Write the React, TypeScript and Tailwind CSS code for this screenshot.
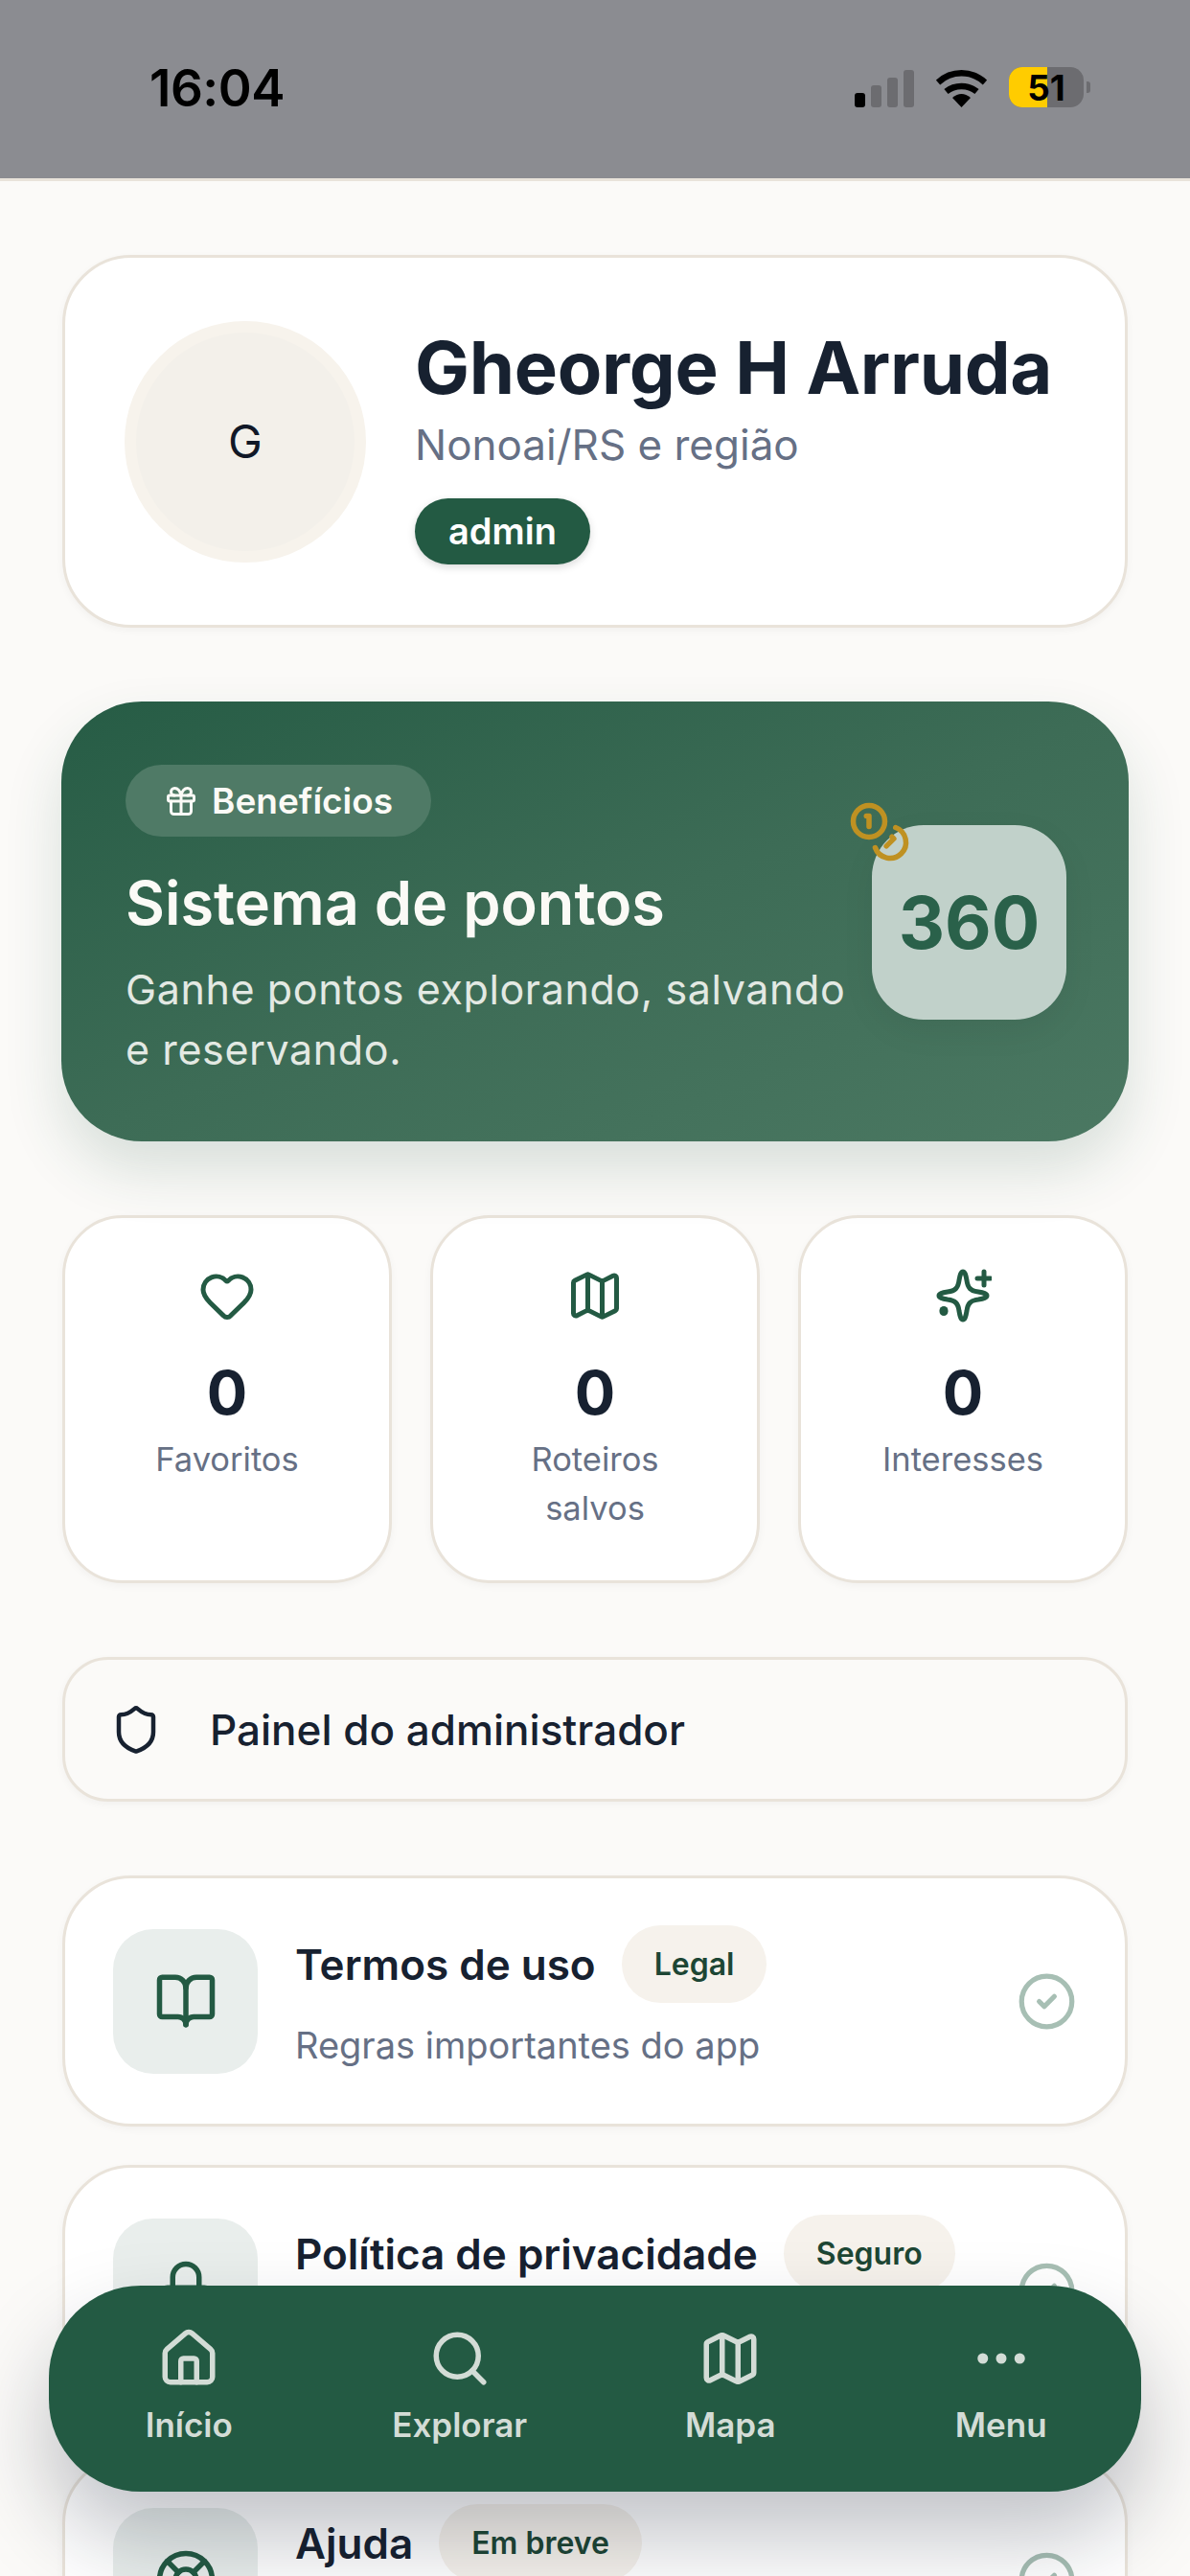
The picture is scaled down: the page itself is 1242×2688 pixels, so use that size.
import React from 'react';
import {
  BookOpen,
  CircleCheck,
  Coins,
  Ellipsis,
  Gift,
  Heart,
  House,
  LifeBuoy,
  Lock,
  Map as MapIcon,
  Search,
  Shield,
} from 'lucide-react';

function StatusBar() {
  return (
    <div className="h-[189px] shrink-0 bg-[#8b8c91] border-b-[3px] border-[#e9e3da] flex justify-between pl-[156px] pr-[104px] pt-[62px]">
      <span className="text-[53px] leading-[60px] font-semibold text-black tracking-[-0.5px]">16:04</span>
      <div className="flex items-start gap-[23px] pt-[11px]">
        <div className="flex items-end gap-[6px] h-[39px]">
          <div className="w-[11px] h-[15px] rounded-[3px] bg-black" />
          <div className="w-[11px] h-[23px] rounded-[3px] bg-[#6c6c70]" />
          <div className="w-[11px] h-[31px] rounded-[3px] bg-[#6c6c70]" />
          <div className="w-[11px] h-[39px] rounded-[3px] bg-[#6c6c70]" />
        </div>
        <svg width="53" height="40" viewBox="0 0 53 40" fill="none" stroke="#000" strokeWidth="6.5">
          <path d="M2 13C16 0 37 0 51 13" />
          <path d="M10.5 22.5c9-7.5 23-7.5 32 0" />
          <path d="M26.5 39L17 29Q26.5 21 36 29Z" fill="#000" stroke="none" />
        </svg>
        <div className="flex items-center gap-[3px] -mt-[3px]">
          <div className="relative w-[78px] h-[42px] rounded-[14px] overflow-hidden bg-[#6c6c70]">
            <div className="w-[40px] h-full bg-[#ffcc00]" />
            <span className="absolute inset-0 flex items-center justify-center text-[37px] leading-none font-bold text-black">51</span>
          </div>
          <div className="w-[4px] h-[12px] rounded-r-[3px] bg-[#6c6c70]" />
        </div>
      </div>
    </div>
  );
}

function ProfileCard() {
  return (
    <div className="h-[389px] rounded-[72px] bg-white border-[3px] border-[#e9e3da] shadow-[0_3px_9px_rgba(0,0,0,0.04)] flex items-center pl-[62px]">
      <div className="w-[252px] h-[252px] shrink-0 rounded-full bg-[#f3f0ea] border-[12px] border-[#f7f3ec] flex items-center justify-center text-[48px] text-[#111827]">
        G
      </div>
      <div className="ml-[51px] pt-[6px] flex flex-col items-start">
        <div className="text-[76px] leading-[90px] font-bold text-[#172130] tracking-[-0.3px] whitespace-nowrap">Gheorge H Arruda</div>
        <div className="mt-[3px] text-[44px] leading-[66px] text-[#667085] whitespace-nowrap">Nonoai/RS e região</div>
        <div className="mt-[23px] h-[69px] px-[35px] rounded-full bg-[#235a43] text-white text-[38px] font-semibold flex items-center shadow-[0_3px_9px_rgba(0,0,0,0.15)]">
          admin
        </div>
      </div>
    </div>
  );
}

function PointsCard() {
  return (
    <div className="relative h-[459px] -mx-[1px] rounded-[84px] bg-[linear-gradient(to_bottom_right,#265c45_0%,#3d6c56_50%,#4b7862_100%)] shadow-[0_30px_60px_rgba(36,90,67,0.16)] pl-[67px] pt-[66px]">
      <div className="inline-flex items-center gap-[14px] h-[75px] px-[40px] rounded-full bg-[#4f7a66] text-[#fbfaf6] text-[37px] font-semibold">
        <Gift size={36} strokeWidth={2} />
        Benefícios
      </div>
      <div className="mt-[27px] text-[63px] leading-[84px] font-semibold text-[#fbfaf6] whitespace-nowrap">Sistema de pontos</div>
      <p className="mt-[17px] w-[770px] text-[43px] tracking-[0.6px] leading-[63px] text-[#e3e9e3]">
        Ganhe pontos explorando, salvando e reservando.
      </p>
      <div className="absolute right-[65px] top-[129px] w-[203px] h-[203px] rounded-[54px] bg-[#c1d1ca] flex items-center justify-center pt-[2px] text-[75px] font-bold text-[#2a614a] shadow-[0_12px_36px_rgba(0,0,0,0.06)]">
        360
      </div>
      <Coins size={66} strokeWidth={2} className="absolute left-[821px] top-[103px] text-[#bf9122]" />
    </div>
  );
}

function SparkleIcon() {
  return (
    <svg width="60" height="60" viewBox="0 0 60 60" fill="none" stroke="#235a43" strokeWidth="5" strokeLinejoin="round" strokeLinecap="round">
      <path d="M30 5C32 5 33 8 34 14C35 22 38 25 46 26C52 27 55 28 55 30C55 32 52 33 46 34C38 35 35 38 34 46C33 52 32 55 30 55C28 55 27 52 26 46C25 38 22 35 14 34C8 33 5 32 5 30C5 28 8 27 14 26C22 25 25 22 26 14C27 8 28 5 30 5Z" />
      <path d="M52 5v14M45 12h14" />
      <path d="M10 45.5v1" strokeWidth="9" />
    </svg>
  );
}

const stats = [
  { label: 'Favoritos', icon: <Heart size={60} strokeWidth={2} className="text-[#235a43]" /> },
  { label: 'Roteiros salvos', icon: <MapIcon size={60} strokeWidth={2} className="text-[#235a43]" /> },
  { label: 'Interesses', icon: <SparkleIcon /> },
];

function Stats() {
  return (
    <div className="grid grid-cols-3 gap-[40px]">
      {stats.map((stat) => (
        <div
          key={stat.label}
          className="h-[384px] rounded-[63px] bg-white border-[3px] border-[#e9e3da] shadow-[0_3px_9px_rgba(0,0,0,0.04)] flex flex-col items-center pt-[51px] px-[48px] text-center"
        >
          {stat.icon}
          <div className="mt-[29px] text-[63px] leading-[84px] font-bold text-[#172130]">0</div>
          <div className="mt-[2px] text-[34.5px] leading-[51px] text-[#667085]">{stat.label}</div>
        </div>
      ))}
    </div>
  );
}

function AdminRow() {
  return (
    <div className="h-[151px] rounded-[48px] border-[3px] border-[#e9e3da] bg-[#fbfaf8] shadow-[0_3px_9px_rgba(0,0,0,0.04)] flex items-center pl-[47px] gap-[50px]">
      <Shield size={54} strokeWidth={2} className="text-[#172130]" />
      <span className="text-[44px] font-medium text-[#172130]">Painel do administrador</span>
    </div>
  );
}

const rows = [
  { title: 'Termos de uso', tag: 'Legal', desc: 'Regras importantes do app', icon: BookOpen },
  { title: 'Política de privacidade', tag: 'Seguro', desc: 'Como seus dados são usados', icon: Lock },
  { title: 'Ajuda', tag: 'Em breve', desc: 'Central de suporte', icon: LifeBuoy },
];

function InfoRows() {
  return (
    <div className="flex flex-col gap-[40px]">
      {rows.map((row) => {
        const Icon = row.icon;
        return (
          <div
            key={row.title}
            className="h-[262px] shrink-0 rounded-[72px] bg-white border-[3px] border-[#e9e3da] shadow-[0_3px_9px_rgba(0,0,0,0.04)] flex items-center pl-[50px] pr-[50px]"
          >
            <div className="w-[151px] h-[151px] shrink-0 rounded-[42px] bg-[#e9eeec] flex items-center justify-center">
              <Icon size={66} strokeWidth={2} className="text-[#235a43]" />
            </div>
            <div className="ml-[39px] flex-1 -mt-[3px]">
              <div className="flex items-center gap-[27px]">
                <span className="text-[44px] font-semibold text-[#172130] whitespace-nowrap">{row.title}</span>
                <span className="h-[81px] px-[34px] rounded-full bg-[#f6f2ec] text-[32px] font-semibold text-[#1d4634] flex items-center whitespace-nowrap">
                  {row.tag}
                </span>
              </div>
              <div className="mt-[14px] text-[38px] leading-[60px] text-[#667085]">{row.desc}</div>
            </div>
            <CircleCheck size={63} strokeWidth={2} className="text-[#a7bfb4]" />
          </div>
        );
      })}
    </div>
  );
}

const navItems = [
  { label: 'Início', icon: House },
  { label: 'Explorar', icon: Search },
  { label: 'Mapa', icon: MapIcon },
  { label: 'Menu', icon: Ellipsis },
];

function BottomNav() {
  return (
    <nav className="absolute left-[51px] top-[2385px] w-[1140px] h-[215px] rounded-[96px] bg-[#235a43] shadow-[0_48px_90px_rgba(15,23,42,0.26)] grid grid-cols-4 px-[5px] pt-[43px]">
      {navItems.map((item) => {
        const Icon = item.icon;
        return (
          <div key={item.label} className="flex flex-col items-center text-[#d3dcd6]">
            <Icon size={66} strokeWidth={2} />
            <span className="mt-[9px] text-[35px] leading-[54px] font-semibold">{item.label}</span>
          </div>
        );
      })}
    </nav>
  );
}

export default function App() {
  return (
    <div className="relative w-[1242px] h-[2688px] overflow-hidden bg-[#fbfaf8] font-[Inter,sans-serif] flex flex-col">
      <StatusBar />
      <main className="px-[65px] pt-[77px] flex flex-col gap-[77px]">
        <ProfileCard />
        <PointsCard />
        <Stats />
        <AdminRow />
        <InfoRows />
      </main>
      <BottomNav />
    </div>
  );
}
